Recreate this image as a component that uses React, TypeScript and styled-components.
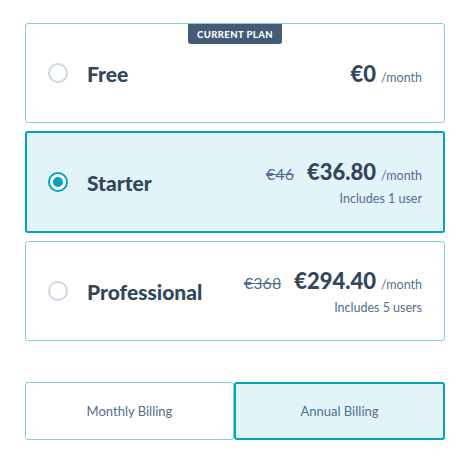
import styled, { createGlobalStyle } from 'styled-components'

const GlobalStyle = createGlobalStyle`
  body {
    margin: 0;
    background: #ffffff;
    font-family: Lato, "Open Sans", sans-serif;
    color: #33475b;
  }
`

const Page = styled.div`
  width: 420px;
  padding: 23px 16px 0 25px;
`

const PlanList = styled.div`
  display: flex;
  flex-direction: column;
  gap: 8px;
`

const PlanCard = styled.div<{ $selected?: boolean }>`
  position: relative;
  box-sizing: border-box;
  height: ${(p) => (p.$selected ? '102px' : '100px')};
  display: flex;
  align-items: center;
  padding: 0 ${(p) => (p.$selected ? '21px' : '22px')};
  border: ${(p) => (p.$selected ? '2px solid #00a4bd' : '1px solid #7fd1de')};
  border-radius: 3px;
  background: ${(p) => (p.$selected ? '#e2f4f8' : '#ffffff')};
`

const Badge = styled.div`
  position: absolute;
  top: 0;
  left: 50%;
  transform: translateX(-50%);
  height: 20px;
  padding: 0 9px;
  display: flex;
  align-items: center;
  background: #425b76;
  color: #ffffff;
  font-size: 9.5px;
  font-weight: 900;
  letter-spacing: 0.4px;
  border-radius: 0 0 3px 3px;
`

const Radio = styled.span<{ $checked?: boolean }>`
  box-sizing: border-box;
  flex: none;
  width: 20px;
  height: 20px;
  border-radius: 50%;
  border: 2px solid ${(p) => (p.$checked ? '#00a4bd' : '#cbd6e2')};
  background: #ffffff;
  display: flex;
  align-items: center;
  justify-content: center;
  &::after {
    content: '';
    display: ${(p) => (p.$checked ? 'block' : 'none')};
    width: 10px;
    height: 10px;
    border-radius: 50%;
    background: #00a4bd;
  }
`

const PlanName = styled.div`
  margin-left: 19px;
  font-size: 21px;
  font-weight: 900;
  color: #33475b;
  flex: 1;
`

const PriceBlock = styled.div`
  display: flex;
  flex-direction: column;
  align-items: flex-end;
  gap: 6px;
`

const PriceLine = styled.div`
  display: flex;
  align-items: baseline;
`

const OldPrice = styled.span`
  font-size: 16px;
  font-weight: 400;
  color: #516f90;
  text-decoration: line-through;
  text-decoration-thickness: 1px;
  margin-right: 13px;
`

const Price = styled.span`
  font-size: 22px;
  font-weight: 900;
  color: #33475b;
`

const Period = styled.span`
  margin-left: 5px;
  font-size: 12.5px;
  color: #516f90;
`

const Users = styled.div`
  font-size: 12.5px;
  color: #516f90;
`

const BillingToggle = styled.div`
  margin-top: 41px;
  display: flex;
  height: 58px;
`

const BillingOption = styled.div<{ $active?: boolean }>`
  box-sizing: border-box;
  flex: 1;
  display: flex;
  align-items: center;
  justify-content: center;
  font-size: 13px;
  color: #516f90;
  border: ${(p) => (p.$active ? '2px solid #00a4bd' : '1px solid #7fd1de')};
  background: ${(p) => (p.$active ? '#e2f4f8' : '#ffffff')};
  border-radius: 3px;
`

const plans = [
  { name: 'Free', price: '€0', current: true },
  { name: 'Starter', old: '€46', price: '€36.80', users: 'Includes 1 user', selected: true },
  { name: 'Professional', old: '€368', price: '€294.40', users: 'Includes 5 users' },
]

export default function App() {
  return (
    <>
      <GlobalStyle />
      <Page>
        <PlanList>
          {plans.map((plan) => (
            <PlanCard key={plan.name} $selected={plan.selected}>
              {plan.current && <Badge>CURRENT PLAN</Badge>}
              <Radio $checked={plan.selected} />
              <PlanName>{plan.name}</PlanName>
              <PriceBlock>
                <PriceLine>
                  {plan.old && <OldPrice>{plan.old}</OldPrice>}
                  <Price>{plan.price}</Price>
                  <Period>/month</Period>
                </PriceLine>
                {plan.users && <Users>{plan.users}</Users>}
              </PriceBlock>
            </PlanCard>
          ))}
        </PlanList>
        <BillingToggle>
          <BillingOption>Monthly Billing</BillingOption>
          <BillingOption $active>Annual Billing</BillingOption>
        </BillingToggle>
      </Page>
    </>
  )
}
